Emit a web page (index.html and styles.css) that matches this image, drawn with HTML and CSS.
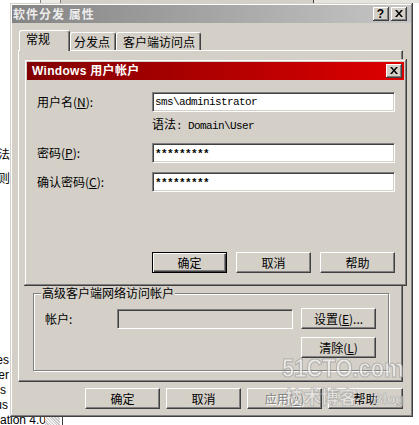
FILE: index.html
```html
<!DOCTYPE html>
<html lang="zh-CN">
<head>
<meta charset="utf-8">
<title>软件分发 属性</title>
<link rel="stylesheet" href="styles.css">
</head>
<body>
<div class="backdrop">
  <div class="bg-header">
    <span class="bgh bgh-a"></span>
    <span class="bgh bgh-b"></span>
    <span class="bgh bgh-c"></span>
    <span class="bgh bgh-d"></span>
  </div>
  <div class="bg-cjk bg-cjk-1"><span>方法</span></div>
  <div class="bg-cjk bg-cjk-2"><span>规则</span></div>
  <ul class="bg-list">
    <li><span>Services</span></li>
    <li><span>Computer</span></li>
    <li class="w6"><span>Packages</span></li>
    <li class="w8"><span>Status</span></li>
  </ul>
  <div class="bg-last"><span class="bg-last-text">ation 4.0</span><span class="bg-hatch"></span><span class="bg-vline"></span></div>
</div>

<section class="win outer">
  <header class="titlebar tb-inactive">
    <span class="tb-text">软件分发 属性</span>
    <span class="tb-btns">
      <span class="capbtn">?</span>
      <span class="capbtn"><svg width="8" height="7" viewBox="0 0 8 7"><path d="M0 0h2l2 2.4L6 0h2L5 3.5 8 7H6L4 4.6 2 7H0l3-3.5z" fill="#000"/></svg></span>
    </span>
  </header>
  <div class="outer-body">
    <div class="tabs">
      <div class="tab tab-sel">常规</div>
      <div class="tab tab-2">分发点</div>
      <div class="tab tab-3">客户端访问点</div>
    </div>
    <div class="panel">
      <fieldset class="group">
        <legend>高级客户端网络访问帐户</legend>
        <div class="group-grid">
          <span class="glabel">帐户:</span>
          <span class="field field-disabled"></span>
          <button type="button" class="btn g-set">设置(<u>E</u>)...</button>
          <button type="button" class="btn g-clear">清除(<u>L</u>)</button>
        </div>
      </fieldset>
    </div>
    <div class="outer-btns">
      <button type="button" class="btn">确定</button>
      <button type="button" class="btn">取消</button>
      <button type="button" class="btn disabled">应用(<u>A</u>)</button>
      <button type="button" class="btn">帮助</button>
    </div>
  </div>
</section>

<section class="win inner">
  <header class="titlebar tb-active">
    <span class="tb-text">Windows 用户帐户</span>
    <span class="capbtn"><svg width="8" height="7" viewBox="0 0 8 7"><path d="M0 0h2l2 2.4L6 0h2L5 3.5 8 7H6L4 4.6 2 7H0l3-3.5z" fill="#000"/></svg></span>
  </header>
  <div class="inner-body">
    <div class="frow"><label>用户名(<u>N</u>):</label><span class="field mono">sms\administrator</span></div>
    <div class="hint"><span>语法</span><span class="mono">: Domain\User</span></div>
    <div class="frow r2"><label>密码(<u>P</u>):</label><span class="field mono pw">*********</span></div>
    <div class="frow r3"><label>确认密码(<u>C</u>):</label><span class="field mono pw">*********</span></div>
    <div class="inner-btns">
      <button type="button" class="btn default">确定</button>
      <button type="button" class="btn">取消</button>
      <button type="button" class="btn">帮助</button>
    </div>
  </div>
</section>

<div class="watermark" aria-hidden="true">
  <div class="wm-site">51CTO.com</div>
  <div class="wm-row"><span class="wm-cn">技术博客</span><span class="wm-blog">Blog</span></div>
</div>
</body>
</html>
```

FILE: styles.css
```css
* { box-sizing: border-box; }
html, body { margin: 0; padding: 0; }
body {
  width: 419px;
  height: 425px;
  overflow: hidden;
  position: relative;
  background: #fff;
  font-family: "Noto Sans CJK SC", "Liberation Sans", sans-serif;
  font-size: 12px;
  color: #000;
}

/* background window */
.backdrop {
  position: absolute;
  left: 0;
  top: 0;
  width: 419px;
  height: 425px;
  display: flex;
  flex-direction: column;
}
.bg-header { height: 3px; display: flex; }
.bgh { height: 3px; }
.bgh-a { width: 40px; background: #fff; }
.bgh-b { width: 20px; border-left: 1px solid #808080; background: #ecebe6; }
.bgh-c { width: 253px; border-left: 1px solid #808080; background: #d4d0c8; }
.bgh-d { flex: 1; border-left: 1px solid #404040; background: #e6e4de; }
.bg-cjk {
  width: 10px;
  display: flex;
  justify-content: flex-end;
  white-space: nowrap;
  line-height: 16px;
}
.bg-cjk-1 { margin-top: 143px; }
.bg-cjk-2 { margin-top: 8px; }
.bg-list {
  list-style: none;
  margin: 167px 0 0;
  padding: 0;
  font-family: "Liberation Sans", sans-serif;
  font-size: 12px;
  line-height: 15px;
}
.bg-list li { width: 9px; display: flex; justify-content: flex-end; white-space: nowrap; }
.bg-list li.w6 { width: 6px; }
.bg-list li.w8 { width: 8px; }
.bg-last {
  display: flex;
  height: 15px;
  font-family: "Liberation Sans", sans-serif;
  font-size: 12px;
  line-height: 15px;
}
.bg-last-text { width: 45px; overflow: hidden; white-space: nowrap; }
.bg-hatch {
  width: 15px;
  margin-top: 3px;
  background: repeating-linear-gradient(45deg, #c8c8c8 0 1px, #f4f4f4 1px 2px);
}
.bg-vline { width: 1px; margin-left: 2px; background: #404040; }

/* windows */
.win {
  position: absolute;
  background: #d4d0c8;
  display: flex;
  flex-direction: column;
  box-shadow: inset -1px -1px 0 #404040, inset 1px 1px 0 #d4d0c8,
              inset -2px -2px 0 #808080, inset 2px 2px 0 #fff;
}
.outer { left: 10px; top: 3px; width: 403px; height: 414px; padding: 2px; z-index: 1; }
.inner { left: 24px; top: 59px; width: 383px; height: 227px; padding: 3px; z-index: 2; }

.titlebar {
  height: 18px;
  flex: none;
  display: flex;
  align-items: center;
  justify-content: space-between;
  font-weight: bold;
  line-height: 18px;
  white-space: nowrap;
}
.tb-inactive {
  background: linear-gradient(to right, #848484, #c6c6c6);
  color: #ececec;
  padding: 0 4px 0 1px;
  letter-spacing: 1px;
}
.tb-active {
  background: linear-gradient(to right, #820000, #de0000);
  color: #fff;
  padding: 0 2px 0 5px;
}
.tb-active .tb-text { font-family: "Liberation Sans", "Noto Sans CJK SC", sans-serif; letter-spacing: 0.3px; }
.tb-btns { display: flex; gap: 2px; }
.capbtn {
  width: 16px;
  height: 14px;
  background: #d4d0c8;
  display: flex;
  align-items: center;
  justify-content: center;
  box-shadow: inset -1px -1px 0 #404040, inset 1px 1px 0 #fff, inset -2px -2px 0 #808080;
  font-family: "Liberation Sans", sans-serif;
  font-size: 12px;
  font-weight: bold;
  color: #000;
  line-height: 14px;
  letter-spacing: 0;
  padding: 0 1px 1px 0;
}

/* outer dialog body */
.outer-body {
  flex: 1;
  display: flex;
  flex-direction: column;
  padding: 7px 8px 0 6px;
}
.tabs {
  display: flex;
  align-items: flex-end;
  height: 21px;
  margin-bottom: -1px;
  padding-left: 1px;
  position: relative;
  z-index: 1;
}
.tab {
  height: 18px;
  margin-bottom: 1px;
  border: 1px solid #fff;
  border-bottom: 0;
  border-right-color: #404040;
  box-shadow: inset -1px 0 0 #808080;
  border-radius: 3px 3px 0 0;
  background: #d4d0c8;
  line-height: 16px;
  padding-top: 1px;
  white-space: nowrap;
}
.tab-sel { width: 51px; height: 21px; margin-bottom: 0; padding: 0 0 0 6px; }
.tab-2 { width: 46px; padding-left: 3px; }
.tab-3 { width: 85px; padding-left: 6px; }

.panel {
  height: 332px;
  flex: none;
  border: 1px solid #fff;
  border-right-color: #404040;
  border-bottom-color: #404040;
  box-shadow: inset -1px -1px 0 #808080;
  padding: 235px 0 0 14px;
}
.group {
  margin: 0;
  width: 356px;
  min-width: 0;
  border: 1px solid #808080;
  box-shadow: inset 1px 1px 0 #fff, 1px 1px 0 #fff;
  padding: 8px 0 12px 11px;
}
.group legend {
  padding: 0 1px;
  margin-left: -4px;
  line-height: 14px;
  background: #d4d0c8;
}
.group-grid {
  display: grid;
  grid-template-columns: 72px 176px 8px 75px;
  grid-template-rows: 21px 21px;
  row-gap: 8px;
  align-items: center;
}
.glabel { line-height: 14px; }
.g-set { grid-column: 4; }
.g-clear { grid-column: 4; grid-row: 2; }

.outer-btns {
  display: flex;
  justify-content: flex-end;
  gap: 6px;
  margin-top: 6px;
}

/* fields */
.field {
  display: block;
  height: 20px;
  border: 1px solid;
  border-color: #808080 #fff #fff #808080;
  box-shadow: inset 1px 1px 0 #404040, inset -1px -1px 0 #d4d0c8;
  background: #fff;
  padding: 0 2px;
  line-height: 18px;
  white-space: nowrap;
  overflow: hidden;
}
.field-disabled { background: #d4d0c8; }
.mono {
  font-family: "Liberation Mono", monospace;
  font-size: 11px;
  letter-spacing: -0.6px;
}
.pw { font-weight: bold; padding-top: 1px; }

/* buttons */
.btn {
  width: 75px;
  height: 21px;
  margin: 0;
  padding: 0;
  font: inherit;
  font-size: 12px;
  line-height: 19px;
  color: #000;
  background: #d4d0c8;
  border: 1px solid;
  border-color: #fff #404040 #404040 #fff;
  box-shadow: inset -1px -1px 0 #808080;
  text-align: center;
  white-space: nowrap;
}
.btn.default {
  border: 1px solid #000;
  box-shadow: inset 1px 1px 0 #fff, inset -1px -1px 0 #404040, inset -2px -2px 0 #808080;
}
.btn.disabled { color: #808080; text-shadow: 1px 1px 0 #fff; }

/* inner dialog body */
.inner-body {
  flex: 1;
  display: flex;
  flex-direction: column;
  padding: 12px 9px 0 10px;
}
.frow { display: flex; align-items: center; height: 20px; }
.frow label { width: 115px; line-height: 14px; flex: none; }
.frow .field { width: 243px; }
.hint {
  margin: 5px 0 0 115px;
  height: 14px;
  line-height: 14px;
  display: flex;
  align-items: baseline;
  white-space: pre;
}
.r2 { margin-top: 12px; }
.r3 { margin-top: 9px; }
.inner-btns { display: flex; gap: 9px; margin: 60px 0 0 115px; }

/* watermark overlay */
.watermark {
  position: absolute;
  left: 282px;
  top: 354px;
  z-index: 3;
  pointer-events: none;
}
.wm-site {
  font-family: "Liberation Sans", sans-serif;
  font-weight: bold;
  font-size: 22px;
  line-height: 24px;
  color: rgba(250, 250, 250, 0.6);
  -webkit-text-stroke: 1px rgba(140, 140, 140, 0.55);
  transform: scaleY(1.2);
  transform-origin: 0 0;
}
.wm-row { display: flex; align-items: baseline; margin-top: 8px; }
.wm-cn {
  font-size: 18px;
  line-height: 20px;
  font-weight: bold;
  color: rgba(250, 250, 250, 0.55);
  -webkit-text-stroke: 0.7px rgba(130, 130, 130, 0.55);
  margin-left: 3px;
}
.wm-blog {
  font-family: "Liberation Sans", sans-serif;
  font-weight: bold;
  font-size: 14px;
  margin-left: 16px;
  color: rgba(250, 250, 250, 0.55);
  -webkit-text-stroke: 0.7px rgba(130, 130, 130, 0.55);
}
```
